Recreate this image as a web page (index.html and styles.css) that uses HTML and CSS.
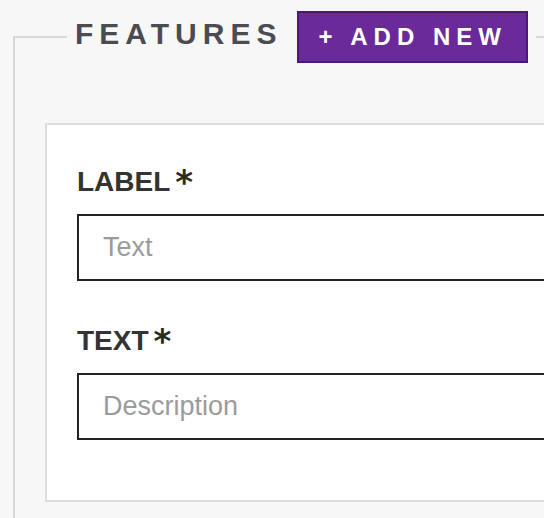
FILE: index.html
```html
<!DOCTYPE html>
<html lang="en">
<head>
    <meta charset="UTF-8">
    <meta name="viewport" content="width=device-width, initial-scale=1.0">
    <title>Features</title>
    <link rel="stylesheet" href="styles.css">
</head>
<body>
    <fieldset class="features">
        <legend class="features-legend">
            <div class="legend-row">
                <span class="features-title">FEATURES</span>
                <button type="button" class="add-btn">+ ADD NEW</button>
            </div>
        </legend>

        <div class="feature-card">
            <div class="field">
                <label class="field-label" for="feature-label">LABEL<span class="req">*</span></label>
                <input type="text" id="feature-label" class="field-input" placeholder="Text">
            </div>
            <div class="field">
                <label class="field-label" for="feature-text">TEXT<span class="req">*</span></label>
                <input type="text" id="feature-text" class="field-input" placeholder="Description">
            </div>
        </div>
    </fieldset>
</body>
</html>
```

FILE: styles.css
```css
html, body {
    overflow: hidden;
}
body {
    font-family: "Liberation Sans", Arial, sans-serif;
    margin: 0;
    padding: 0;
    background-color: #f7f7f7;
}
.features {
    width: 700px;
    margin: 11px 0 0 13px;
    padding: 60px 0 40px 30px;
    border: 2px solid #d5d9dc;
}
.features-legend {
    margin-left: 22px;
    padding: 0 8px;
}
.legend-row {
    display: flex;
    align-items: center;
    gap: 15px;
}
.features-title {
    font-size: 30px;
    font-weight: bold;
    letter-spacing: 6px;
    color: #4b4b52;
    margin-bottom: 6px;
}
.add-btn {
    height: 52px;
    padding: 0 19px;
    font-family: "Liberation Sans", Arial, sans-serif;
    font-size: 24px;
    font-weight: bold;
    letter-spacing: 6px;
    color: #fff;
    background: #6a2a9a;
    border: 2px solid #4b1878;
    border-radius: 0;
    cursor: pointer;
}
.feature-card {
    background: #fff;
    border: 2px solid #dcdcdc;
    padding: 41px 30px 60px;
}
.field + .field {
    margin-top: 44px;
}
.field-label {
    display: block;
    font-size: 28px;
    line-height: 32px;
    font-weight: bold;
    color: #333;
    margin-bottom: 16px;
}
.req {
    font-family: "DejaVu Sans", sans-serif;
    font-size: 34px;
    line-height: 0;
    margin-left: 5px;
    vertical-align: -3px;
    color: #2a2a2a;
}
.field-input {
    display: block;
    width: 100%;
    box-sizing: border-box;
    height: 67px;
    padding: 0 24px;
    font-family: "Liberation Sans", Arial, sans-serif;
    font-size: 27px;
    color: #333;
    background: #fff;
    border: 2px solid #222;
    border-radius: 0;
    outline: none;
}
.field-input::placeholder {
    color: #9b9b9b;
}
```
